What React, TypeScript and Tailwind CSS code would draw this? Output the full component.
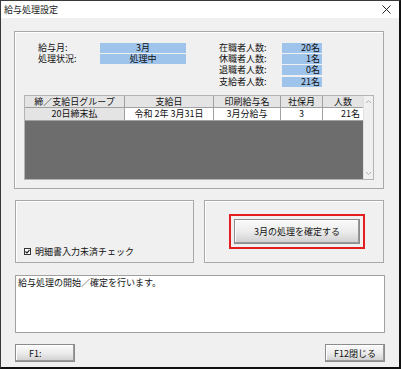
import React from "react";

const font = { fontFamily: '"Noto Sans CJK JP", "Noto Sans", sans-serif' };

function Btn({ children, className = "" }: { children: React.ReactNode; className?: string }) {
  return (
    <div
      className={`flex items-center justify-center border border-[#8c8c8c] bg-gradient-to-b from-[#fbfbfb] via-[#ececec] to-[#cfcfcf] shadow-[inset_-1px_-1px_0_#9a9a9a,inset_1px_1px_0_#ffffff] text-[9px] leading-none text-[#111] ${className}`}
    >
      {children}
    </div>
  );
}

function InfoRow({ label, value, labelW, boxW }: { label: string; value: string; labelW: string; boxW: string; }) {
  return (
    <div className="flex h-[11.4px] items-center">
      <div className={`${labelW} text-[9px] leading-[10px] text-[#111]`}>{label}</div>
      <div className={`${boxW} h-[10px] bg-[#9fc4ec] text-[9px] leading-[10px] text-[#111]`}>{value}</div>
    </div>
  );
}

export default function App() {
  return (
    <div style={font} className="w-[401px] h-[369px] bg-[#f0f0f0] border border-[#3a3a3a] border-r-2 border-b-2 border-r-[#111] border-b-[#111] flex flex-col overflow-hidden">
      {/* title bar */}
      <div className="h-[17px] bg-white flex items-center justify-between pl-[3px] pr-[6px] shrink-0">
        <span className="text-[9px] leading-none text-[#222]">給与処理設定</span>
        <svg width="9" height="9" viewBox="0 0 9 9" className="mr-[2px]">
          <path d="M0.5 0.5 L8.5 8.5 M8.5 0.5 L0.5 8.5" stroke="#222" strokeWidth="1" />
        </svg>
      </div>

      <div className="flex flex-col pl-[13px] pt-[13px]">
        {/* top panel */}
        <div className="w-[370px] h-[158px] border border-[#a8a8a8] shadow-[inset_1px_1px_0_#ffffff] flex flex-col">
          <div className="flex h-[63px] pt-[10px] shrink-0">
            <div className="pl-[23px] flex flex-col">
              <InfoRow label="給与月:" value={"3月"} labelW="w-[62px]" boxW="w-[86px] text-center" />
              <InfoRow label="処理状況:" value="処理中" labelW="w-[62px]" boxW="w-[86px] text-center" />
            </div>
            <div className="pl-[33px] flex flex-col">
              <InfoRow label="在職者人数:" value="20名" labelW="w-[63px]" boxW="w-[40px] text-right pr-[2px]" />
              <InfoRow label="休職者人数:" value="1名" labelW="w-[63px]" boxW="w-[40px] text-right pr-[2px]" />
              <InfoRow label="退職者人数:" value="0名" labelW="w-[63px]" boxW="w-[40px] text-right pr-[2px]" />
              <InfoRow label="支給者人数:" value="21名" labelW="w-[63px]" boxW="w-[40px] text-right pr-[2px]" />
            </div>
          </div>

          {/* table */}
          <div className="ml-[9px] w-[350px] h-[85px] border border-[#b4b4b4] flex shrink-0">
            <div className="w-[338px] flex flex-col">
              <div className="flex h-[12px] bg-[#e4e4e4] text-[9px] leading-[11px] text-[#111] border-b border-[#a0a0a0]">
                <div className="w-[100px] text-center border-r border-[#a0a0a0]">締／支給日グループ</div>
                <div className="w-[89px] text-center border-r border-[#a0a0a0]">支給日</div>
                <div className="w-[67px] text-center border-r border-[#a0a0a0]">印刷給与名</div>
                <div className="w-[42px] text-center border-r border-[#a0a0a0]">社保月</div>
                <div className="w-[40px] text-center">人数</div>
              </div>
              <div className="flex h-[13px] text-[9px] leading-[12px] text-[#111] border-b border-[#a0a0a0]">
                <div className="w-[100px] text-center bg-[#e4e4e4] border-r border-[#a0a0a0]">20日締末払</div>
                <div className="w-[89px] text-center bg-white border-r border-[#a0a0a0]">令和 2年 3月31日</div>
                <div className="w-[67px] text-center bg-white border-r border-[#a0a0a0]">3月分給与</div>
                <div className="w-[42px] text-center bg-white border-r border-[#a0a0a0]">3</div>
                <div className="w-[40px] text-right pr-[3px] bg-white">21名</div>
              </div>
              <div className="flex-1 bg-[#6d6d6d]" />
            </div>
            <div className="flex-1 bg-[#f0f0f0] border-l border-[#e0e0e0] flex flex-col items-center justify-between py-[3px]">
              <svg width="7" height="5" viewBox="0 0 7 5"><path d="M1 4 L3.5 1.5 L6 4" stroke="#b0b0b0" fill="none" /></svg>
              <svg width="7" height="5" viewBox="0 0 7 5"><path d="M1 1 L3.5 3.5 L6 1" stroke="#b0b0b0" fill="none" /></svg>
            </div>
          </div>
        </div>

        {/* middle panels */}
        <div className="flex mt-[11px] pl-[1px] gap-[10px]">
          <div className="w-[179px] h-[63px] border border-[#a8a8a8] shadow-[inset_1px_1px_0_#ffffff] flex items-end pl-[8px] pb-[6px]">
            <div className="flex items-center gap-[4px]">
              <div className="w-[7px] h-[7px] border border-[#333] bg-white flex items-center justify-center">
                <svg width="5" height="5" viewBox="0 0 5 5"><path d="M0.5 2.5 L2 4 L4.5 0.8" stroke="#111" strokeWidth="1.1" fill="none" /></svg>
              </div>
              <span className="text-[9px] leading-none text-[#111]">明細書入力未済チェック</span>
            </div>
          </div>
          <div className="w-[180px] h-[63px] border border-[#a8a8a8] shadow-[inset_1px_1px_0_#ffffff] flex items-center justify-center pl-[6px]">
            <div className="border-2 border-[#e41e1e] p-[3px] w-[136px] h-[35px]">
              <Btn className="w-full h-full">3月の処理を確定する</Btn>
            </div>
          </div>
        </div>

        {/* message */}
        <div className="mt-[12px] ml-[1px] w-[370px] h-[58px] bg-white border border-[#a0a0a0] px-[2px] pt-[1px] text-[9px] leading-[12px] text-[#111]">
          給与処理の開始／確定を行います。
        </div>

        {/* buttons */}
        <div className="mt-[11px] ml-[1px] w-[370px] flex justify-between">
          <Btn className="w-[60px] h-[18px] !justify-start pl-[13px]">F1:</Btn>
          <Btn className="w-[60px] h-[18px]">F12閉じる</Btn>
        </div>
      </div>
    </div>
  );
}
